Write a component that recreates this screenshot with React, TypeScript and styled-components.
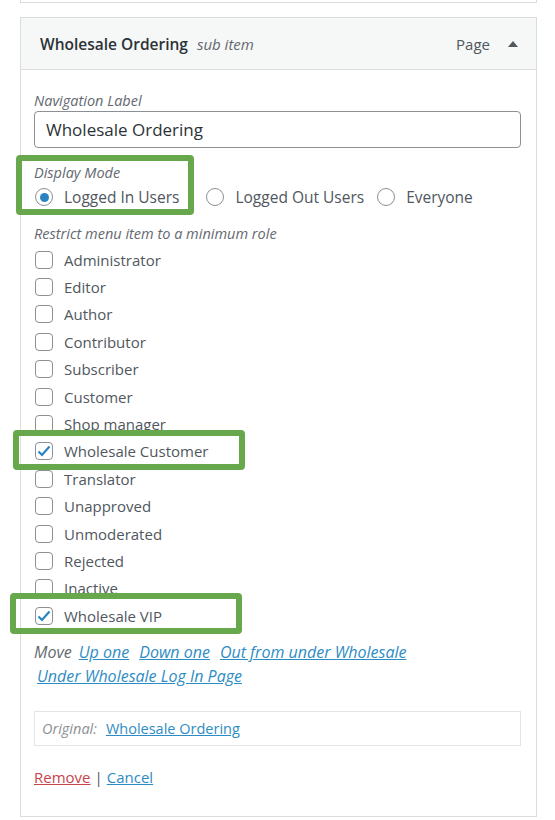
import React from "react";
import styled, { createGlobalStyle } from "styled-components";

const GlobalStyle = createGlobalStyle`
  html, body {
    margin: 0;
    padding: 0;
    background: #fff;
  }
  body {
    font-family: "Open Sans", "Noto Sans", sans-serif;
    color: #50575e;
  }
`;

const Page = styled.div`
  position: relative;
  width: 555px;
  height: 820px;
  overflow: hidden;
  padding-left: 20px;
  box-sizing: border-box;
`;

const PrevItem = styled.div`
  width: 517px;
  height: 3px;
  box-sizing: border-box;
  border: 1px solid #dcdcde;
  border-top: none;
  background: #fff;
`;

const Panel = styled.div`
  margin-top: 14px;
  width: 517px;
  box-sizing: border-box;
  border: 1px solid #dcdcde;
  background: #fff;
`;

const Header = styled.div`
  height: 51px;
  display: flex;
  align-items: center;
  background: #f6f7f7;
  border-bottom: 1px solid #dcdcde;
  padding: 0 18px 0 19px;
`;

const Title = styled.span`
  font-weight: 600;
  font-size: 15.5px;
  color: #2c3338;
`;

const SubItem = styled.span`
  font-style: italic;
  font-size: 15px;
  color: #646970;
  margin-left: 9px;
`;

const ItemType = styled.span`
  margin-left: auto;
  font-size: 15px;
  color: #50575e;
`;

const Arrow = styled.span`
  margin-left: 18px;
  width: 0;
  height: 0;
  border-left: 5px solid transparent;
  border-right: 5px solid transparent;
  border-bottom: 6px solid #50575e;
`;

const Body = styled.div`
  padding: 21px 15px 29px 13px;
`;

const FieldLabel = styled.div<{ $top?: number }>`
  font-style: italic;
  font-size: 14.5px;
  line-height: 20px;
  color: #646970;
  margin-top: ${(p) => p.$top ?? 0}px;
`;

const TextInput = styled.div`
  height: 37px;
  box-sizing: border-box;
  border: 1px solid #8c8f94;
  border-radius: 4px;
  display: flex;
  align-items: center;
  padding: 0 11px;
  font-size: 17px;
  color: #2c3338;
`;

const RadioRow = styled.div`
  display: flex;
  align-items: center;
  height: 24px;
  margin-top: 2px;
`;

const RadioOption = styled.label`
  display: flex;
  align-items: center;
  font-size: 15.5px;
  color: #50575e;
  margin-right: 26px;
  &:nth-child(2) {
    margin-right: 12px;
  }
`;

const RadioCircle = styled.span<{ $checked?: boolean }>`
  width: 18px;
  height: 18px;
  box-sizing: border-box;
  border: 1px solid #8c8f94;
  border-radius: 50%;
  display: flex;
  align-items: center;
  justify-content: center;
  margin: 0 11px 0 1px;
  &::after {
    content: "";
    display: ${(p) => (p.$checked ? "block" : "none")};
    width: 9px;
    height: 9px;
    border-radius: 50%;
    background: #2a84c1;
  }
`;

const RoleList = styled.div`
  display: flex;
  flex-direction: column;
  margin-top: 2px;
`;

const RoleRow = styled.label`
  display: flex;
  align-items: center;
  height: 27.4px;
  font-size: 15px;
  color: #50575e;
`;

const Box = styled.span`
  width: 18px;
  height: 18px;
  box-sizing: border-box;
  border: 1px solid #8c8f94;
  border-radius: 4px;
  display: flex;
  align-items: center;
  justify-content: center;
  margin: 0 11px 0 1px;
`;

const MoveRow = styled.div`
  margin-top: 11px;
  font-size: 16px;
  line-height: 24px;
  font-style: italic;
  color: #646970;
`;

const Link = styled.a<{ $danger?: boolean }>`
  color: ${(p) => (p.$danger ? "#c9444a" : "#2e8cc4")};
  text-decoration: underline;
  cursor: pointer;
`;

const MoveLink = styled(Link)`
  margin-left: 10px;
  &:first-of-type {
    margin-left: 7px;
  }
`;

const SecondLine = styled(Link)`
  margin-left: 3px;
`;

const Original = styled.div`
  margin-top: 23px;
  height: 35px;
  box-sizing: border-box;
  border: 1px solid #e4e4e6;
  display: flex;
  align-items: center;
  padding: 0 7px;
  font-size: 14.5px;
`;

const OriginalLabel = styled.span`
  font-style: italic;
  color: #8c8f94;
  margin-right: 9px;
`;

const Actions = styled.div`
  margin-top: 21px;
  font-size: 15px;
  color: #50575e;
  display: flex;
  gap: 4px;
`;

const Highlight = styled.div<{ $x: number; $y: number; $w: number; $h: number }>`
  position: absolute;
  left: ${(p) => p.$x}px;
  top: ${(p) => p.$y}px;
  width: ${(p) => p.$w}px;
  height: ${(p) => p.$h}px;
  box-sizing: border-box;
  border: 6px solid #68a84c;
  border-radius: 4px;
  pointer-events: none;
`;

function Check() {
  return (
    <svg width="14" height="12" viewBox="0 0 14 12">
      <path d="M1.5 6.5 L5 10 L12.5 1.5" fill="none" stroke="#2a84c1" strokeWidth="2.2" />
    </svg>
  );
}

const roles: { name: string; checked?: boolean }[] = [
  { name: "Administrator" },
  { name: "Editor" },
  { name: "Author" },
  { name: "Contributor" },
  { name: "Subscriber" },
  { name: "Customer" },
  { name: "Shop manager" },
  { name: "Wholesale Customer", checked: true },
  { name: "Translator" },
  { name: "Unapproved" },
  { name: "Unmoderated" },
  { name: "Rejected" },
  { name: "Inactive" },
  { name: "Wholesale VIP", checked: true },
];

export default function App() {
  return (
    <>
      <GlobalStyle />
      <Page>
        <PrevItem />
        <Panel>
          <Header>
            <Title>Wholesale Ordering</Title>
            <SubItem>sub item</SubItem>
            <ItemType>Page</ItemType>
            <Arrow />
          </Header>
          <Body>
            <FieldLabel>Navigation Label</FieldLabel>
            <TextInput>Wholesale Ordering</TextInput>

            <FieldLabel $top={15}>Display Mode</FieldLabel>
            <RadioRow>
              <RadioOption>
                <RadioCircle $checked />
                Logged In Users
              </RadioOption>
              <RadioOption>
                <RadioCircle />
                Logged Out Users
              </RadioOption>
              <RadioOption>
                <RadioCircle />
                Everyone
              </RadioOption>
            </RadioRow>

            <FieldLabel $top={15}>Restrict menu item to a minimum role</FieldLabel>
            <RoleList>
              {roles.map((r) => (
                <RoleRow key={r.name}>
                  <Box>{r.checked && <Check />}</Box>
                  {r.name}
                </RoleRow>
              ))}
            </RoleList>

            <MoveRow>
              Move
              <MoveLink>Up one</MoveLink>
              <MoveLink>Down one</MoveLink>
              <MoveLink>Out from under Wholesale</MoveLink>
              <br />
              <SecondLine>Under Wholesale Log In Page</SecondLine>
            </MoveRow>

            <Original>
              <OriginalLabel>Original:</OriginalLabel>
              <Link>Wholesale Ordering</Link>
            </Original>

            <Actions>
              <Link $danger>Remove</Link>
              <span>|</span>
              <Link>Cancel</Link>
            </Actions>
          </Body>
        </Panel>

        <Highlight $x={16} $y={155} $w={178} $h={60} />
        <Highlight $x={13} $y={430} $w={232} $h={40} />
        <Highlight $x={10} $y={593} $w={232} $h={41} />
      </Page>
    </>
  );
}
